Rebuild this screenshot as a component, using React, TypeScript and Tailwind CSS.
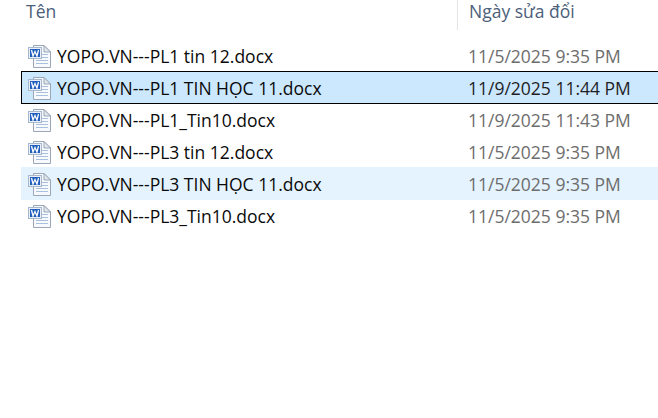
const files = [
  { name: 'YOPO.VN---PL1 tin 12.docx', date: '11/5/2025 9:35 PM', state: '' },
  { name: 'YOPO.VN---PL1 TIN HỌC 11.docx', date: '11/9/2025 11:44 PM', state: 'selected' },
  { name: 'YOPO.VN---PL1_Tin10.docx', date: '11/9/2025 11:43 PM', state: '' },
  { name: 'YOPO.VN---PL3 tin 12.docx', date: '11/5/2025 9:35 PM', state: '' },
  { name: 'YOPO.VN---PL3 TIN HỌC 11.docx', date: '11/5/2025 9:35 PM', state: 'hover' },
  { name: 'YOPO.VN---PL3_Tin10.docx', date: '11/5/2025 9:35 PM', state: '' },
];

const WordIcon = () => (
  <svg width="24" height="24" viewBox="0 0 24 24" className="shrink-0">
    <path d="M5.5 0.5H16L22.5 7V22.5H5.5Z" fill="#f7f9fc" stroke="#9aa7b8" />
    <path d="M16 0.5V7H22.5Z" fill="#dfe6ee" stroke="#9aa7b8" strokeLinejoin="round" />
    <path d="M14 9.5H20M14 12.5H20M8 15.5H20M8 18.5H20" stroke="#a9c0dc" strokeWidth="1" />
    <rect x="0.5" y="2.5" width="13" height="11" fill="#e8eff8" stroke="#a8b8cc" />
    <rect x="2" y="4" width="10" height="8" fill="#1f5fbf" />
    <path d="M3.5 5L5 11L7 6.5L9 11L10.5 5" fill="none" stroke="#ffffff" strokeWidth="1.3" />
  </svg>
);

const App = () => {
  return (
    <div className="h-[418px] w-[658px] overflow-hidden bg-white font-['Open_Sans',sans-serif]">
      {/* Column headers */}
      <div className="flex h-[30px] text-[17.5px] text-[#4c607a]">
        <div className="w-[457px] pl-[26px] leading-[22px]">Tên</div>
        <div className="flex-1 border-l border-[#e5e5e5] pl-[11px] leading-[22px]">Ngày sửa đổi</div>
      </div>

      {/* File rows */}
      <div className="mt-[9px] w-[680px] pl-[21px]">
        {files.map((file) => (
          <div
            key={file.name}
            className={`-mb-[1px] flex h-[33px] items-center pt-[2px] text-[17.5px] ${
              file.state === 'selected'
                ? 'border border-black bg-[#cce8ff]'
                : file.state === 'hover'
                  ? 'border border-transparent bg-[#e5f3ff]'
                  : 'border border-transparent'
            }`}
          >
            <div className="flex w-[446px] items-center gap-[5px] pl-[6px]">
              <WordIcon />
              <span className="whitespace-nowrap text-[#0a0a0a]">{file.name}</span>
            </div>
            <span className={`whitespace-nowrap ${file.state === 'selected' ? 'text-[#1f1f1f]' : 'text-[#6d6d6d]'}`}>
              {file.date}
            </span>
          </div>
        ))}
      </div>
    </div>
  );
};

export default App;
